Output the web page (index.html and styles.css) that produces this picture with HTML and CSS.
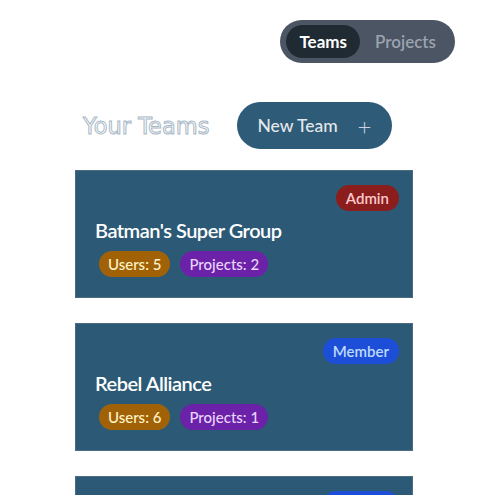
FILE: index.html
```html
<!DOCTYPE html>
<html>
<head>
<meta charset="utf-8">
<link rel="stylesheet" href="styles.css">
</head>
<body>
<header class="topbar">
  <nav class="toggle">
    <span class="toggle-item active">Teams</span>
    <span class="toggle-item">Projects</span>
  </nav>
</header>
<main class="content">
  <div class="title-row">
    <h1 class="page-title">Your Teams</h1>
    <button class="new-btn"><span>New Team</span><span class="plus">+</span></button>
  </div>
  <section class="cards">
    <article class="card">
      <div class="role-row"><span class="role admin">Admin</span></div>
      <h2 class="team-name">Batman's Super Group</h2>
      <div class="stats">
        <span class="stat users">Users: 5</span>
        <span class="stat projects">Projects: 2</span>
      </div>
    </article>
    <article class="card">
      <div class="role-row"><span class="role member">Member</span></div>
      <h2 class="team-name">Rebel Alliance</h2>
      <div class="stats">
        <span class="stat users">Users: 6</span>
        <span class="stat projects">Projects: 1</span>
      </div>
    </article>
    <article class="card">
      <div class="role-row"><span class="role member">Member</span></div>
      <h2 class="team-name">Justice League</h2>
      <div class="stats">
        <span class="stat users">Users: 4</span>
        <span class="stat projects">Projects: 3</span>
      </div>
    </article>
  </section>
</main>
</body>
</html>
```
FILE: styles.css
```css
html, body {
  margin: 0;
  padding: 0;
  background: #ffffff;
  overflow: hidden;
  font-family: Lato, "Noto Sans", sans-serif;
}
.topbar {
  display: flex;
  justify-content: flex-end;
  padding: 20px 49px 0 0;
}
.toggle {
  display: flex;
  align-items: center;
  gap: 2px;
  background: #4b5563;
  border-radius: 22px;
  height: 43px;
  padding: 0 6px;
  box-sizing: border-box;
}
.toggle-item {
  font-size: 17px;
  font-weight: 600;
  color: #9ca3af;
  padding: 0 13px;
  height: 33px;
  line-height: 33px;
  border-radius: 17px;
}
.toggle-item.active {
  background: #1f2a33;
  color: #ffffff;
  font-weight: 700;
}
.content {
  padding: 39px 0 0 75px;
  width: 338px;
}
.title-row {
  display: flex;
  align-items: center;
  padding-left: 8px;
  gap: 28px;
}
.page-title {
  margin: 0;
  font-family: "DejaVu Sans", Verdana, sans-serif;
  font-size: 22.5px;
  font-weight: 400;
  color: #ffffff;
  -webkit-text-stroke: 1px #a8b8c6;
}
.new-btn {
  display: flex;
  align-items: center;
  justify-content: space-between;
  width: 155px;
  height: 47px;
  padding: 0 21px 0 20px;
  border: none;
  border-radius: 24px;
  background: #2d5b78;
  color: #e5e7eb;
  font-family: inherit;
  font-size: 17.5px;
  font-weight: 500;
}
.plus {
  font-size: 24px;
  font-weight: 300;
  color: #cbd5e1;
}
.cards {
  display: flex;
  flex-direction: column;
  gap: 25px;
  margin-top: 21px;
}
.card {
  background: #2c5a76;
  border: 1px solid #4a6b80;
  height: 128px;
  box-sizing: border-box;
  padding: 14px 13px 0 19px;
}
.role-row {
  display: flex;
  justify-content: flex-end;
}
.role {
  font-size: 15px;
  font-weight: 600;
  height: 26px;
  line-height: 26px;
  padding: 0 10px;
  border-radius: 13px;
}
.role.admin { background: #8b1d1d; color: #fecaca; }
.role.member { background: #1d4ed8; color: #bfdbfe; }
.team-name {
  margin: 6px 0 0;
  font-size: 20px;
  letter-spacing: -0.5px;
  font-weight: 600;
  color: #ffffff;
  line-height: 26px;
}
.stats {
  display: flex;
  gap: 10px;
  margin: 8px 0 0 4px;
}
.stat {
  font-size: 15px;
  font-weight: 500;
  height: 26px;
  line-height: 26px;
  padding: 0 9px;
  border-radius: 13px;
}
.stat.users { background: #a16207; color: #fef3c7; }
.stat.projects { background: #6b21a8; color: #e9d5ff; }
```
